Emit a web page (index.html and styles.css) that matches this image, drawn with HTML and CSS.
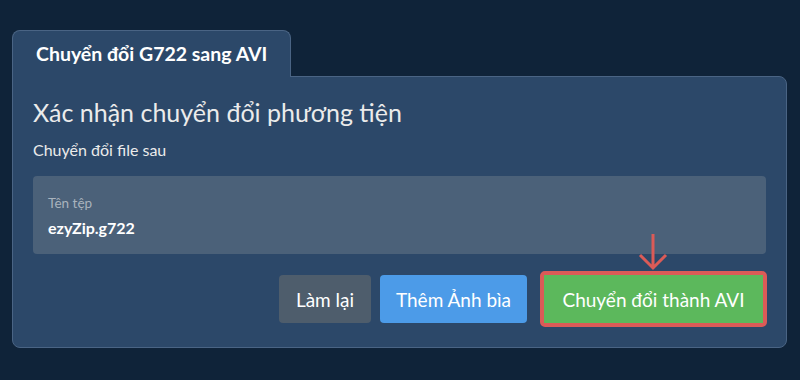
FILE: index.html
```html
<!DOCTYPE html>
<html lang="vi">
<head>
<meta charset="utf-8">
<link rel="stylesheet" href="styles.css">
</head>
<body>
<div class="wrap">
  <div class="tab">Chuyển đổi G722 sang AVI</div>
  <div class="panel">
    <h1 class="title">Xác nhận chuyển đổi phương tiện</h1>
    <p class="sub">Chuyển đổi file sau</p>
    <div class="file">
      <div class="file-label">Tên tệp</div>
      <div class="file-name">ezyZip.g722</div>
    </div>
    <div class="actions">
      <button class="btn btn-grey">Làm lại</button>
      <button class="btn btn-blue">Thêm Ảnh bìa</button>
      <div class="hl">
        <svg class="arrow" width="30" height="38" viewBox="0 0 30 38">
          <path d="M15 1 V35 M2 22 L15 35 L28 22" fill="none" stroke="#db5b57" stroke-width="3"/>
        </svg>
        <button class="btn btn-green">Chuyển đổi thành AVI</button>
      </div>
    </div>
  </div>
</div>
</body>
</html>
```
FILE: styles.css
```css
* { box-sizing: border-box; }
html, body { margin: 0; }
body {
  background: #0f2339;
  font-family: Lato, "Noto Sans", sans-serif;
  color: #ebebeb;
  width: 800px;
  height: 380px;
  overflow: hidden;
}
.wrap {
  padding: 30px 13px 0 12px;
}
.tab {
  display: inline-block;
  position: relative;
  z-index: 1;
  background: #2c4869;
  border: 1px solid #4a6484;
  border-bottom: none;
  border-radius: 8px 8px 0 0;
  height: 47px;
  padding: 0 23px;
  font-weight: 700;
  font-size: 19.5px;
  line-height: 46px;
  color: #ffffff;
  margin-bottom: -1px;
}
.panel {
  background: #2c4869;
  border: 1px solid #4a6484;
  border-radius: 0 8px 8px 8px;
  padding: 20px 20px 20px 20px;
}
.title {
  margin: 0;
  font-weight: 400;
  font-size: 25px;
  line-height: 30px;
  color: #ebebeb;
}
.sub {
  margin: 12px 0 0 0;
  font-size: 16px;
  line-height: 22px;
  color: #ebebeb;
}
.file {
  margin-top: 15px;
  background: #4b6179;
  border-radius: 4px;
  height: 78px;
  padding: 18px 15px 0 15px;
}
.file-label {
  font-size: 13.5px;
  line-height: 18px;
  color: #a9b3bd;
}
.file-name {
  margin-top: 6px;
  font-size: 16px;
  font-weight: 700;
  line-height: 20px;
  color: #ffffff;
}
.actions {
  display: flex;
  justify-content: flex-end;
  align-items: center;
  gap: 9px;
  margin-top: 17px;
}
.btn {
  font-family: Lato, "Noto Sans", sans-serif;
  font-size: 19px;
  color: #ffffff;
  border: none;
  border-radius: 4px;
  height: 48px;
  padding: 0 6px;
  cursor: pointer;
}
.btn-grey { background: #4e5d6c; width: 92px; }
.btn-blue { background: #4c9be8; width: 147px; }
.hl {
  position: relative;
  margin-left: 4px;
  border: 4px solid #db5b57;
  border-radius: 5px;
  margin-right: -1px;
}
.btn-green {
  display: block;
  background: #5cb85c;
  border-radius: 0;
  width: 219px;
}
.arrow {
  position: absolute;
  left: 50%;
  margin-left: -16px;
  top: -42px;
}
```
